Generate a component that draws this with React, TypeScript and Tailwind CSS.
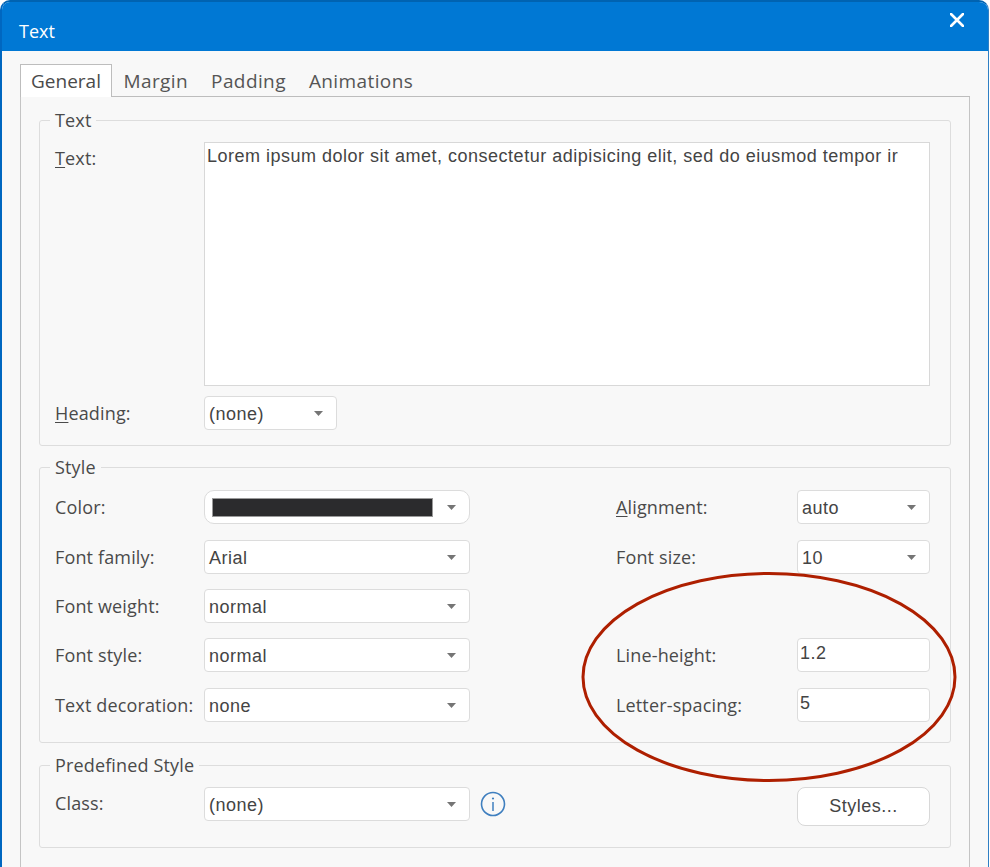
import type { ReactNode } from "react";

const labelFont = "font-['Open_Sans','Noto_Sans',sans-serif]";
const valueFont = "font-['Liberation_Sans',Arial,sans-serif] tracking-[0.5px]";

function Caret() {
  return (
    <svg width="9" height="5" viewBox="0 0 9 5" className="shrink-0">
      <path d="M0 0h9L4.5 5z" fill="#757575" />
    </svg>
  );
}

function Label({
  children,
  width = "w-[149px]",
  className = "",
}: {
  children: ReactNode;
  width?: string;
  className?: string;
}) {
  return (
    <span className={`${width} ${className} shrink-0 text-[18px] leading-[24px] tracking-[0.15px] whitespace-nowrap text-[#4a4a4a]`}>
      {children}
    </span>
  );
}

function Select({
  value,
  width = "w-[266px]",
  children,
  rounded = "rounded-[4px]",
}: {
  value?: string;
  width?: string;
  children?: ReactNode;
  rounded?: string;
}) {
  return (
    <div
      className={`${width} ${rounded} ${valueFont} flex h-[34px] shrink-0 items-center justify-between border border-[#dcdcdc] bg-white pr-[13px] pl-[4px] text-[18px] text-[#444444]`}
    >
      {children ?? <span className="translate-y-px">{value}</span>}
      <Caret />
    </div>
  );
}

function NumberInput({ value }: { value: string }) {
  return (
    <div
      className={`${valueFont} h-[34px] w-[133px] shrink-0 rounded-[4px] border border-[#dcdcdc] bg-white pl-[2px] text-[18px] leading-[28px] text-[#444444]`}
    >
      {value}
    </div>
  );
}

function Row({ children, className = "" }: { children: ReactNode; className?: string }) {
  return <div className={`${className} flex items-center`}>{children}</div>;
}

function Group({ title, className, children }: { title: string; className: string; children: ReactNode }) {
  return (
    <fieldset className={`${className} rounded-[3px] border border-[#dddddd] pl-[15px]`}>
      <legend className="-ml-[5px] px-[5px] text-[18px] leading-[22px] tracking-[0.15px] text-[#4a4a4a]">{title}</legend>
      {children}
    </fieldset>
  );
}

function Tab({ label, active }: { label: string; active?: boolean }) {
  if (active) {
    return (
      <div className="relative z-10 -mb-px flex h-[33px] w-[92px] items-center justify-center border border-b-0 border-[#bdbdbd] bg-white text-[#4a4a4a]">
        {label}
      </div>
    );
  }
  return (
    <div className="flex h-[32px] items-center px-[11.5px] pt-[2px] tracking-[0.4px] text-[#555555]">{label}</div>
  );
}

function StyleSection() {
  return (
    <Group title="Style" className="mt-[10px] h-[287px]">
      <div className="mt-[12px] flex">
        <div className="flex flex-col gap-[15px]">
          <Row>
            <Label>Color:</Label>
            <Select rounded="rounded-[10px]">
              <div className="ml-[3px] h-[19px] w-[221px] border border-[#9a9a9a] bg-[#2b2b2d]" />
            </Select>
          </Row>
          <Row className="mt-px">
            <Label>Font family:</Label>
            <Select value="Arial" />
          </Row>
          <Row>
            <Label>Font weight:</Label>
            <Select value="normal" />
          </Row>
          <Row>
            <Label>Font style:</Label>
            <Select value="normal" />
          </Row>
          <Row className="mt-px">
            <Label>Text decoration:</Label>
            <Select value="none" />
          </Row>
        </div>
        <div className="ml-[146px] flex flex-col gap-[15px]">
          <Row>
            <Label width="w-[181px]">
              <u className="underline-offset-2">A</u>lignment:
            </Label>
            <Select value="auto" width="w-[133px]" />
          </Row>
          <Row className="mt-px">
            <Label width="w-[181px]">Font size:</Label>
            <Select value="10" width="w-[133px]" />
          </Row>
          <div className="h-[34px]" />
          <Row>
            <Label width="w-[181px]">Line-height:</Label>
            <NumberInput value="1.2" />
          </Row>
          <Row className="mt-px">
            <Label width="w-[181px]">Letter-spacing:</Label>
            <NumberInput value="5" />
          </Row>
        </div>
      </div>
    </Group>
  );
}

export default function App() {
  return (
    <div className={`${labelFont} relative h-[867px] w-[990px] overflow-hidden bg-white`}>
      <div className="flex h-[900px] w-[989px] flex-col overflow-hidden rounded-t-[10px] border-t-2 border-r border-l-2 border-t-[#0063b1] border-r-[#2f7fc4] border-l-[#0067c0] bg-[#f8f8f8]">
        {/* title bar */}
        <div className="flex h-[49px] shrink-0 items-start justify-between bg-[#0078d4] pr-[24px] pl-[17px] text-white">
          <span className="mt-[17px] text-[18px] leading-[25px]">Text</span>
          <svg width="14" height="14" viewBox="0 0 14 14" className="mt-[11px]">
            <path d="M1 1l12 12M13 1L1 13" stroke="#ffffff" strokeWidth="2.6" strokeLinecap="round" />
          </svg>
        </div>

        <div className="mt-[13px] ml-[18px] flex h-[33px] w-[950px] items-end border-b border-[#bdbdbd] text-[19px]">
          <Tab label="General" active />
          <Tab label="Margin" />
          <Tab label="Padding" />
          <Tab label="Animations" />
        </div>

        <div className="ml-[18px] h-[800px] w-[950px] border-r border-l border-[#c4c4c4] pt-[12px] pr-[18px] pl-[18px]">
          <Group title="Text" className="h-[337px]">
            <div className="mt-[11px] flex items-start">
              <Label className="pt-[4px]">
                <u className="underline-offset-2">T</u>ext:
              </Label>
              <div
                className={`${valueFont} h-[244px] w-[726px] border border-[#d8d8d8] bg-white px-[2px] text-[18px] leading-[26px] whitespace-nowrap text-[#444444]`}
              >
                Lorem ipsum dolor sit amet, consectetur adipisicing elit, sed do eiusmod tempor ir
              </div>
            </div>
            <div className="mt-[10px]">
              <Row>
                <Label>
                  <u className="underline-offset-2">H</u>eading:
                </Label>
                <Select value="(none)" width="w-[133px]" />
              </Row>
            </div>
          </Group>

          <StyleSection />

          <Group title="Predefined Style" className="mt-[11px] h-[94px]">
            <div className="mt-[11px] flex items-start">
              <Label className="pt-[4px]">Class:</Label>
              <Select value="(none)" />
              <svg width="26" height="26" viewBox="0 0 26 26" className="mt-[4px] ml-[10px] shrink-0">
                <circle cx="13" cy="13" r="11.5" fill="none" stroke="#3f7fbf" strokeWidth="1.6" />
                <circle cx="13" cy="7.5" r="1.1" fill="#3f7fbf" />
                <path d="M13 11v9" stroke="#3f7fbf" strokeWidth="1.5" />
              </svg>
              <div
                className={`${valueFont} ml-[291px] flex h-[39px] w-[133px] shrink-0 items-center justify-center rounded-[8px] border border-[#d8d8d8] bg-white text-[18px] text-[#444444]`}
              >
                Styles...
              </div>
            </div>
          </Group>
        </div>
      </div>

      {/* red annotation */}
      <svg width="990" height="867" className="pointer-events-none absolute top-0 left-0">
        <ellipse cx="769" cy="677" rx="186" ry="103.5" fill="none" stroke="#ae1f00" strokeWidth="3" />
      </svg>
    </div>
  );
}
